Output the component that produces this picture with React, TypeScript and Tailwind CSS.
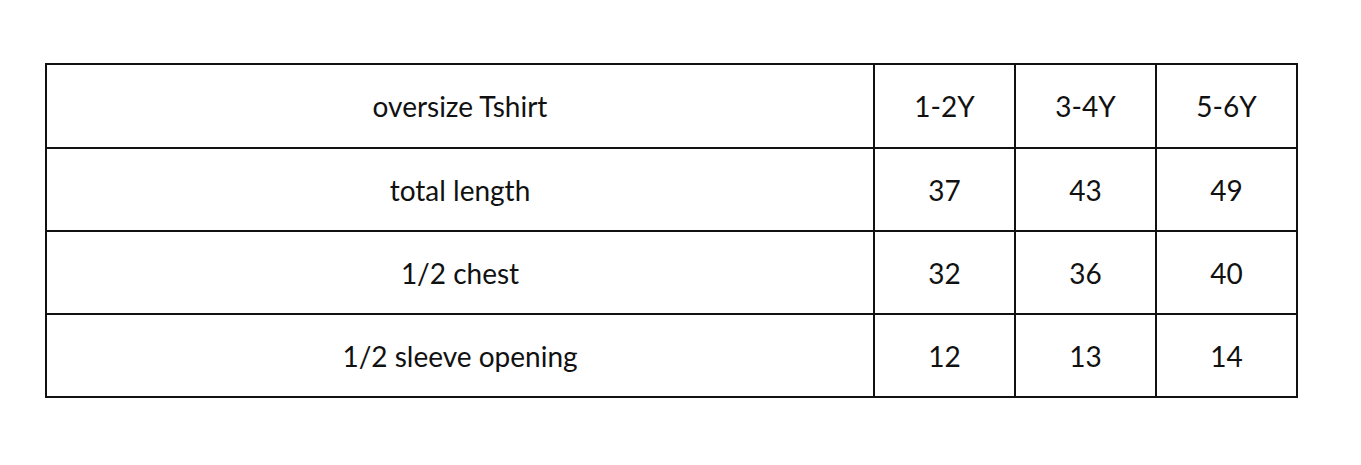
const rows = [
  { label: 'oversize Tshirt', values: ['1-2Y', '3-4Y', '5-6Y'], h: 'h-[82px]' },
  { label: 'total length', values: ['37', '43', '49'], h: 'h-[81px]' },
  { label: '1/2 chest', values: ['32', '36', '40'], h: 'h-[81px]' },
  { label: '1/2 sleeve opening', values: ['12', '13', '14'], h: 'h-[81px]' },
];

export default function App() {
  return (
    <div className="min-h-[465px] w-[1361px] bg-white pl-[45px] pt-[63px]" style={{ fontFamily: 'Lato, "Liberation Sans", sans-serif' }}>
      <div className="grid w-[1253px] grid-cols-[826px_139px_139px_139px] gap-[2px] bg-[#111] p-[2px] text-[28px] text-[#111]">
        {rows.map((row) => (
          <>
            <div key={row.label} className={`${row.h} flex items-center justify-center bg-white`}>
              {row.label}
            </div>
            {row.values.map((v, i) => (
              <div key={row.label + i} className="flex items-center justify-center bg-white">
                {v}
              </div>
            ))}
          </>
        ))}
      </div>
    </div>
  );
}
